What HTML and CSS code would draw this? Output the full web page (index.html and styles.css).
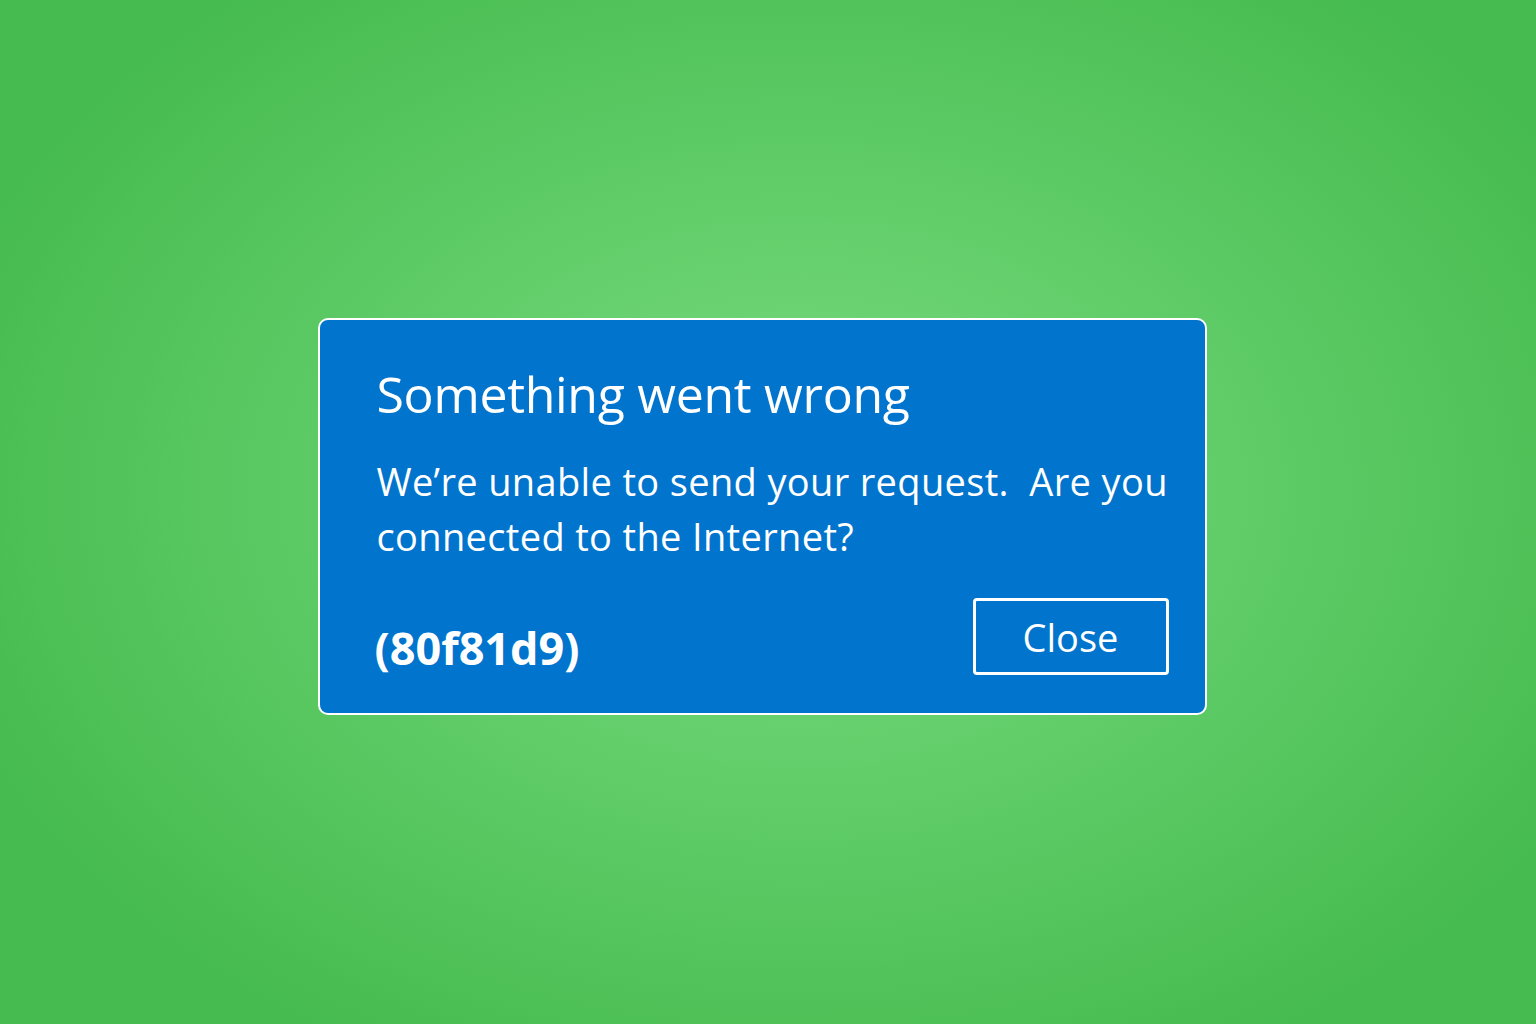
FILE: index.html
```html
<!DOCTYPE html>
<html lang="en">
<head>
    <meta charset="utf-8">
    <title>Something went wrong</title>
    <meta name="viewport" content="width=device-width, initial-scale=1">
    <link rel="stylesheet" href="styles.css">
</head>
<body>
    <div id="dialog" role="dialog" aria-labelledby="heading" aria-describedby="desc">
        <h2 id="heading">Something went wrong</h2>
        <p id="desc">We’re unable to send your request.&nbsp; Are you connected to the Internet?</p>
        <div class="footer">
            <span class="code">(80f81d9)</span>
            <button class="close">Close</button>
        </div>
    </div>
</body>
</html>
```

FILE: styles.css
```css
html, body {
    height: 100%;
}

body {
    margin: 0;
    display: flex;
    align-items: center;
    justify-content: center;
    font-family: "Open Sans", "Noto Sans", sans-serif;
    color: white;
    background: radial-gradient(ellipse 58% 62% at 52% 48%, #7cda80 0%, #62ce6a 45%, #46bb4f 100%);
}

#dialog {
    box-sizing: border-box;
    width: 889px;
    height: 397px;
    margin: 9px 12px 0 0;
    padding: 44px 36px 38px 57px;
    border: 2px solid white;
    border-radius: 10px;
    background-color: #0174cd;
    display: flex;
    flex-direction: column;
}

#heading {
    margin: 0;
    font-size: 50px;
    font-weight: 400;
    line-height: 1.2;
    letter-spacing: -0.3px;
}

#desc {
    margin: 30px 0 0;
    font-size: 38px;
    line-height: 55px;
    letter-spacing: 0.35px;
}

.footer {
    margin-top: auto;
    display: flex;
    justify-content: space-between;
    align-items: flex-end;
}

.code {
    font-size: 45px;
    font-weight: 700;
    line-height: 1;
    margin-bottom: 5px;
    margin-left: -2px;
}

.close {
    box-sizing: border-box;
    width: 196px;
    height: 77px;
    border: 3px solid white;
    border-radius: 4px;
    background: transparent;
    color: white;
    font-family: inherit;
    font-size: 38px;
    padding: 0;
}
```
